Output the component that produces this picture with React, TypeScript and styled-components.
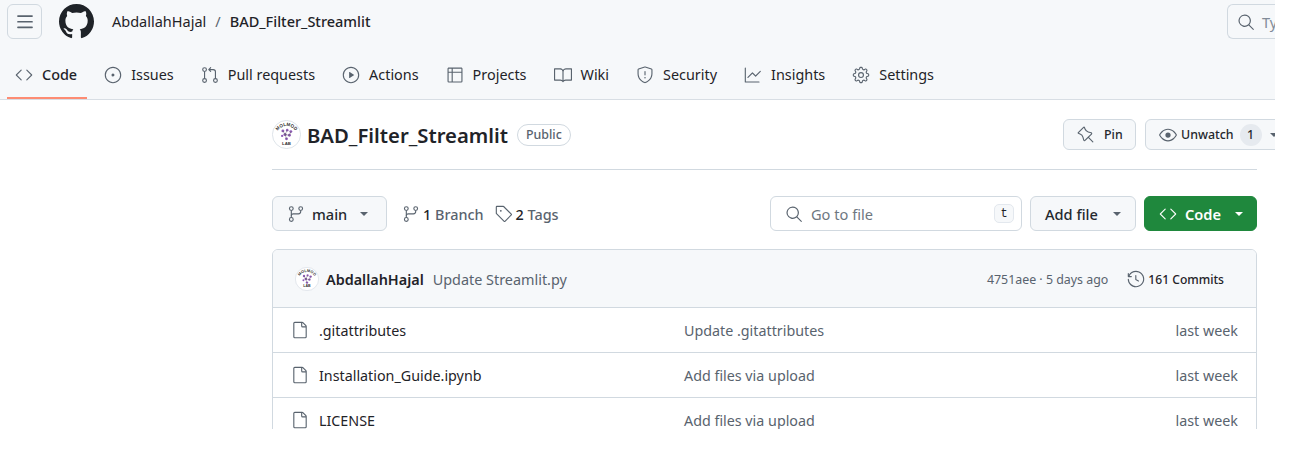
import React from 'react';
import styled, { createGlobalStyle } from 'styled-components';
import {
  GoBook,
  GoCode,
  GoEye,
  GoFile,
  GoGear,
  GoGitBranch,
  GoGitPullRequest,
  GoGraph,
  GoHistory,
  GoIssueOpened,
  GoPin,
  GoPlay,
  GoSearch,
  GoShield,
  GoTable,
  GoTag,
} from 'react-icons/go';

const GlobalStyle = createGlobalStyle`
  html, body {
    margin: 0;
    padding: 0;
    background: #fff;
  }
  body {
    font-family: "Noto Sans", "Open Sans", "Liberation Sans", sans-serif;
    font-size: 14px;
    color: #1f2328;
  }
`;

const Frame = styled.div`
  width: 1275px;
  height: 429px;
  overflow: hidden;
`;

const Header = styled.header`
  height: 99px;
  box-sizing: content-box;
  background: #f6f8fa;
  border-bottom: 1px solid #d8dee4;
  display: flex;
  flex-direction: column;
`;

const TopBar = styled.div`
  height: 44px;
  padding: 4px 0 0 7px;
  box-sizing: border-box;
  display: flex;
  align-items: flex-start;
  overflow: hidden;
`;

const MenuButton = styled.div`
  width: 35px;
  height: 35px;
  box-sizing: border-box;
  border: 1px solid #d1d9e0;
  border-radius: 6px;
  display: flex;
  align-items: center;
  justify-content: center;
  color: #59636e;
`;

const Logo = styled.div`
  width: 35px;
  height: 35px;
  margin-left: 17px;
  color: #1f2328;
  display: flex;
`;

const Crumbs = styled.div`
  margin-left: 18px;
  height: 35px;
  padding-bottom: 2px;
  box-sizing: border-box;
  display: flex;
  align-items: center;
  gap: 8px;
  font-size: 14.5px;
`;

const Slash = styled.span`
  color: #59636e;
  margin: 0 1px;
`;

const RepoCrumb = styled.span`
  font-weight: 500;
  color: #1f2328;
`;

const TopSearch = styled.div`
  margin-left: auto;
  width: 48px;
  height: 35px;
  box-sizing: border-box;
  border: 1px solid #d1d9e0;
  border-right: none;
  border-radius: 6px 0 0 6px;
  display: flex;
  align-items: center;
  padding-left: 9px;
  gap: 7px;
  color: #59636e;
  font-size: 14.6px;
  overflow: hidden;
  white-space: nowrap;
  svg {
    flex: none;
  }
`;

const Placeholder = styled.span`
  color: #818b98;
`;

const Nav = styled.nav`
  flex: 1;
  display: flex;
  gap: 10px;
  padding-left: 7px;
`;

const Tab = styled.div<{ $active?: boolean }>`
  height: 55px;
  box-sizing: border-box;
  padding: 8px ${(p) => (p.$active ? 10 : 9)}px 0 8px;
  margin-right: ${(p) => (p.$active ? -1 : 0)}px;
  display: flex;
  align-items: center;
  gap: 9px;
  font-size: 14.4px;
  font-weight: ${(p) => (p.$active ? 500 : 400)};
  color: #1f2328;
  border-bottom: 2px solid ${(p) => (p.$active ? '#fd8c73' : 'transparent')};
  margin-bottom: -1px;
  svg {
    color: #59636e;
    flex: none;
  }
`;

const Main = styled.main`
  padding: 18px 18px 0 272px;
`;

const RepoHead = styled.div`
  height: 33px;
  display: flex;
  align-items: center;
  padding-bottom: 18px;
  border-bottom: 1px solid #d1d9e0;
`;

const RepoTitle = styled.h1`
  margin: 0 0 0 6px;
  font-size: 20.3px;
  font-weight: 600;
  color: #1f2328;
`;

const PublicLabel = styled.span`
  margin-left: 9px;
  height: 20px;
  padding: 0 8px;
  border: 1px solid #d1d9e0;
  border-radius: 11px;
  font-size: 12.4px;
  font-weight: 500;
  color: #59636e;
  display: flex;
  align-items: center;
`;

const HeadActions = styled.div`
  margin-left: auto;
  margin-right: -18px;
  display: flex;
  gap: 9px;
  overflow: hidden;
  width: 212px;
  flex: none;
`;

const SmallButton = styled.div<{ $width: number }>`
  width: ${(p) => p.$width}px;
  flex: none;
  height: 31px;
  box-sizing: border-box;
  background: #f6f8fa;
  border: 1px solid #d1d9e0;
  border-radius: 6px;
  display: flex;
  align-items: center;
  font-size: 12.4px;
  font-weight: 500;
  color: #25292e;
  svg {
    color: #59636e;
    flex: none;
  }
`;

const PinButton = styled(SmallButton)`
  padding-left: 13px;
  gap: 9px;
`;

const WatchButton = styled(SmallButton)`
  padding-left: 13px;
  gap: 4px;
`;

const Counter = styled.span`
  width: 22px;
  height: 22px;
  border-radius: 50%;
  background: #e6eaef;
  margin-left: 2px;
  display: flex;
  align-items: center;
  justify-content: center;
  font-size: 12.4px;
`;

const Caret = styled.i<{ $color?: string; $left?: number }>`
  display: block;
  flex: none;
  width: 0;
  height: 0;
  margin-left: ${(p) => p.$left ?? 0}px;
  border-left: 4.5px solid transparent;
  border-right: 4.5px solid transparent;
  border-top: 4.5px solid ${(p) => p.$color ?? '#59636e'};
`;

const FileBar = styled.div`
  margin-top: 26px;
  height: 35px;
  display: flex;
  align-items: center;
`;

const Button = styled.div<{ $width: number }>`
  width: ${(p) => p.$width}px;
  flex: none;
  height: 35px;
  box-sizing: border-box;
  background: #f6f8fa;
  border: 1px solid #d1d9e0;
  border-radius: 6px;
  display: flex;
  align-items: center;
  font-size: 14.6px;
  font-weight: 500;
  color: #25292e;
`;

const BranchButton = styled(Button)`
  padding-left: 14px;
  gap: 7px;
  svg {
    color: #59636e;
  }
`;

const AddFile = styled(Button)`
  margin-left: 8px;
  padding-left: 14px;
`;

const CodeButton = styled(Button)`
  margin-left: 8px;
  padding-left: 14px;
  background: #1f883d;
  border-color: #1f883d;
  color: #fff;
  gap: 8px;
  font-weight: 600;
`;

const BarLink = styled.span<{ $left: number }>`
  margin-left: ${(p) => p.$left}px;
  padding-top: 1px;
  display: flex;
  align-items: center;
  gap: 3px;
  font-size: 14.4px;
  color: #59636e;
  font-weight: 500;
  svg {
    flex: none;
  }
  b {
    color: #1f2328;
    font-weight: 500;
  }
`;

const GoToFile = styled.div`
  margin-left: auto;
  width: 252px;
  height: 35px;
  box-sizing: border-box;
  border: 1px solid #d1d9e0;
  border-radius: 6px;
  background: #fff;
  padding: 0 7px 0 14px;
  display: flex;
  align-items: center;
  gap: 8px;
  font-size: 14.6px;
  color: #6e7781;
  svg {
    color: #59636e;
  }
`;

const Kbd = styled.span`
  margin-left: auto;
  width: 20px;
  height: 19px;
  box-sizing: border-box;
  border: 1px solid #e3e8ee;
  border-radius: 5px;
  background: #f6f8fa;
  display: flex;
  align-items: center;
  justify-content: center;
  font-family: "Liberation Mono", monospace;
  font-size: 12px;
  color: #1f2328;
`;

const Table = styled.section`
  margin-top: 18px;
  border: 1px solid #d1d9e0;
  border-radius: 6px 6px 0 0;
  overflow: hidden;
`;

const CommitHead = styled.div`
  height: 57px;
  box-sizing: border-box;
  background: #f6f8fa;
  display: flex;
  align-items: center;
  padding: 1px 32px 0 22px;
  font-size: 14.4px;
`;

const Author = styled.span`
  margin-left: 7px;
  font-weight: 600;
  color: #1f2328;
`;

const CommitMessage = styled.span`
  margin-left: 9px;
  color: #59636e;
`;

const CommitMeta = styled.span`
  margin-left: auto;
  font-size: 12.4px;
  color: #59636e;
`;

const CommitCount = styled.span`
  margin-left: 19px;
  display: flex;
  align-items: center;
  gap: 3px;
  font-size: 12.1px;
  font-weight: 500;
  color: #1f2328;
  svg {
    color: #59636e;
  }
`;

const Row = styled.div`
  height: 44px;
  border-top: 1px solid #d1d9e0;
  display: grid;
  grid-template-columns: 393px 1fr auto;
  align-items: center;
  padding: 0 18px;
  font-size: 14.3px;
`;

const FileName = styled.span`
  display: flex;
  align-items: center;
  gap: 10px;
  color: #1f2328;
  svg {
    color: #59636e;
  }
`;

const RowText = styled.span`
  color: #59636e;
`;

const ThreeBars: React.FC<{ size: number }> = ({ size }) => (
  <svg width={size} height={size} viewBox="0 0 16 16" fill="currentColor">
    <path d="M1 2.75A.75.75 0 0 1 1.75 2h12.5a.75.75 0 0 1 0 1.5H1.75A.75.75 0 0 1 1 2.75Zm0 5A.75.75 0 0 1 1.75 7h12.5a.75.75 0 0 1 0 1.5H1.75A.75.75 0 0 1 1 7.75ZM1.75 12h12.5a.75.75 0 0 1 0 1.5H1.75a.75.75 0 0 1 0-1.5Z" />
  </svg>
);

const GithubMark: React.FC<{ size: number }> = ({ size }) => (
  <svg width={size} height={size} viewBox="0 0 16 16" fill="currentColor">
    <path d="M8 0c4.42 0 8 3.58 8 8a8.013 8.013 0 0 1-5.45 7.59c-.4.08-.55-.17-.55-.38 0-.27.01-1.13.01-2.2 0-.75-.25-1.23-.54-1.48 1.78-.2 3.65-.88 3.65-3.95 0-.88-.31-1.59-.82-2.15.08-.2.36-1.02-.08-2.12 0 0-.67-.22-2.2.82-.64-.18-1.32-.27-2-.27-.68 0-1.36.09-2 .27-1.53-1.03-2.2-.82-2.2-.82-.44 1.1-.16 1.92-.08 2.12-.51.56-.82 1.28-.82 2.15 0 3.06 1.86 3.75 3.64 3.95-.23.2-.44.55-.51 1.07-.46.21-1.61.55-2.33-.66-.15-.24-.6-.83-1.23-.82-.67.01-.27.38.01.53.34.19.73.9.82 1.13.16.45.68 1.31 2.69.94 0 .67.01 1.3.01 1.49 0 .21-.15.45-.55.38A7.995 7.995 0 0 1 0 8c0-4.42 3.58-8 8-8Z" />
  </svg>
);

const Avatar: React.FC<{ size: number }> = ({ size }) => (
  <svg width={size} height={size} viewBox="0 0 40 40" style={{ flex: 'none' }}>
    <circle cx="20" cy="20" r="19.4" fill="#fff" stroke="#d1d9e0" />
    <path id="arc" d="M6 19 A14.5 14.5 0 0 1 34 19" fill="none" />
    <text fontSize="6.4" fontWeight="700" fill="#333" fontFamily="Liberation Sans, sans-serif">
      <textPath href="#arc" startOffset="50%" textAnchor="middle">MOLMOD</textPath>
    </text>
    <text x="20" y="34" fontSize="6" fontWeight="700" fill="#333" textAnchor="middle" fontFamily="Liberation Sans, sans-serif">
      LAB
    </text>
    <g fill="#8e5bb5">
      <circle cx="15" cy="15" r="2" />
      <circle cx="21" cy="14" r="1.8" />
      <circle cx="26" cy="16" r="2" />
      <circle cx="18" cy="20" r="2.2" />
      <circle cx="24" cy="21" r="2" />
      <circle cx="14" cy="22" r="1.6" />
      <circle cx="20" cy="26" r="2" />
    </g>
    <path d="M15 15 18 20 21 14M18 20 24 21 26 16M18 20 20 26" stroke="#555" strokeWidth=".6" fill="none" />
  </svg>
);

const tabs = [
  { label: 'Code', Icon: GoCode, active: true },
  { label: 'Issues', Icon: GoIssueOpened },
  { label: 'Pull requests', Icon: GoGitPullRequest },
  { label: 'Actions', Icon: GoPlay },
  { label: 'Projects', Icon: GoTable },
  { label: 'Wiki', Icon: GoBook },
  { label: 'Security', Icon: GoShield },
  { label: 'Insights', Icon: GoGraph },
  { label: 'Settings', Icon: GoGear },
];

const files = [
  { name: '.gitattributes', message: 'Update .gitattributes', date: 'last week' },
  { name: 'Installation_Guide.ipynb', message: 'Add files via upload', date: 'last week' },
  { name: 'LICENSE', message: 'Add files via upload', date: 'last week' },
];

const App: React.FC = () => (
  <Frame>
    <GlobalStyle />
    <Header>
      <TopBar>
        <MenuButton>
          <ThreeBars size={18} />
        </MenuButton>
        <Logo>
          <GithubMark size={35} />
        </Logo>
        <Crumbs>
          <span>AbdallahHajal</span>
          <Slash>/</Slash>
          <RepoCrumb>BAD_Filter_Streamlit</RepoCrumb>
        </Crumbs>
        <TopSearch>
          <GoSearch size={18} />
          <Placeholder>Type</Placeholder>
        </TopSearch>
      </TopBar>
      <Nav>
        {tabs.map(({ label, Icon, active }) => (
          <Tab key={label} $active={active}>
            <Icon size={18} />
            {label}
          </Tab>
        ))}
      </Nav>
    </Header>
    <Main>
      <RepoHead>
        <Avatar size={29} />
        <RepoTitle>BAD_Filter_Streamlit</RepoTitle>
        <PublicLabel>Public</PublicLabel>
        <HeadActions>
          <PinButton $width={73}>
            <GoPin size={18} />
            Pin
          </PinButton>
          <WatchButton $width={140}>
            <GoEye size={18} />
            Unwatch
            <Counter>1</Counter>
            <Caret $left={4} />
          </WatchButton>
        </HeadActions>
      </RepoHead>
      <FileBar>
        <BranchButton $width={115}>
          <GoGitBranch size={18} />
          main
          <Caret $left={6} />
        </BranchButton>
        <BarLink $left={15}>
          <GoGitBranch size={18} />
          <span>
            <b>1</b> Branch
          </span>
        </BarLink>
        <BarLink $left={11}>
          <GoTag size={18} />
          <span>
            <b>2</b> Tags
          </span>
        </BarLink>
        <GoToFile>
          <GoSearch size={18} />
          Go to file
          <Kbd>t</Kbd>
        </GoToFile>
        <AddFile $width={106}>
          Add file
          <Caret $left={15} />
        </AddFile>
        <CodeButton $width={113}>
          <GoCode size={18} />
          Code
          <Caret $color="#fff" $left={6} />
        </CodeButton>
      </FileBar>
      <Table>
        <CommitHead>
          <Avatar size={24} />
          <Author>AbdallahHajal</Author>
          <CommitMessage>Update Streamlit.py</CommitMessage>
          <CommitMeta>4751aee · 5 days ago</CommitMeta>
          <CommitCount>
            <GoHistory size={18} />
            161 Commits
          </CommitCount>
        </CommitHead>
        {files.map((file) => (
          <Row key={file.name}>
            <FileName>
              <GoFile size={18} />
              {file.name}
            </FileName>
            <RowText>{file.message}</RowText>
            <RowText>{file.date}</RowText>
          </Row>
        ))}
      </Table>
    </Main>
  </Frame>
);

export default App;
